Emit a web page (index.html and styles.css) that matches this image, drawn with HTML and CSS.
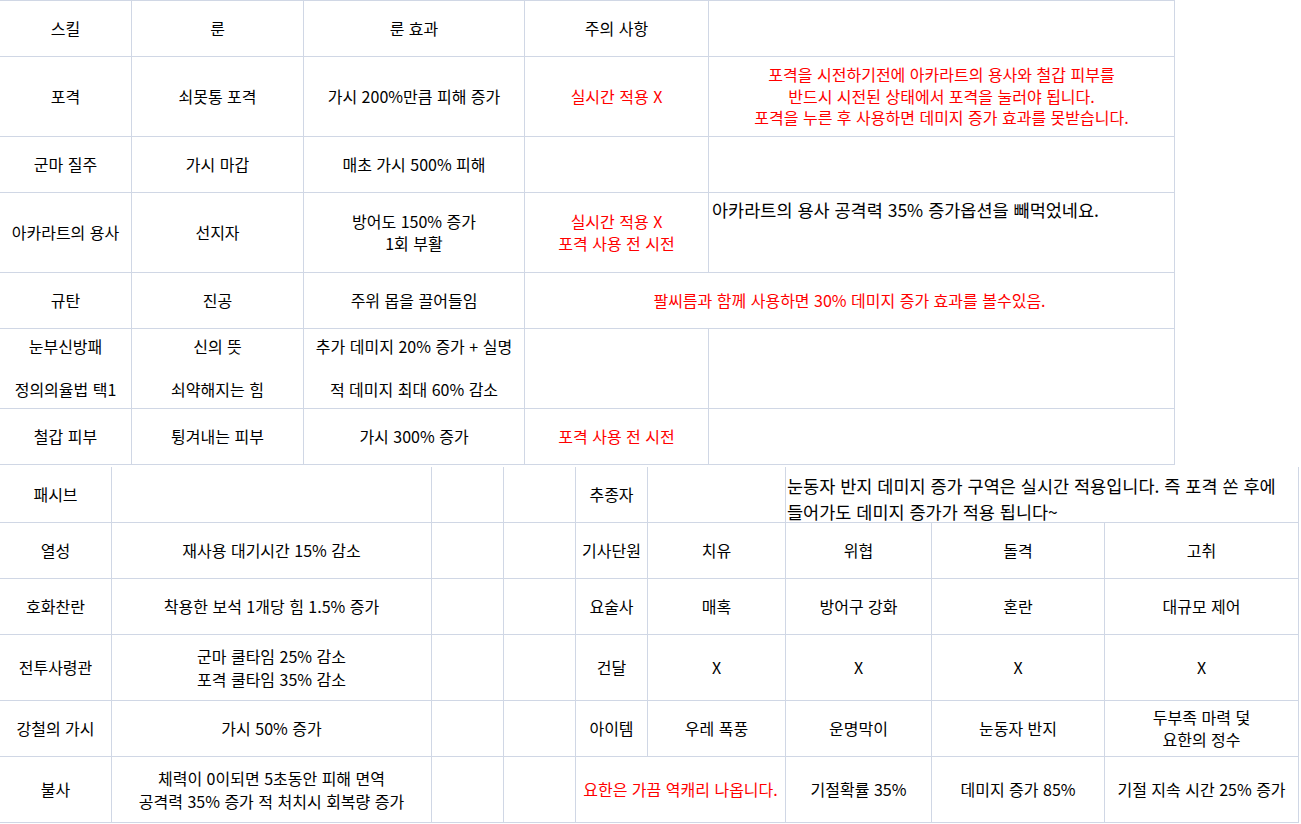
FILE: index.html
```html
<!DOCTYPE html>
<html lang="ko">
<head>
<meta charset="utf-8">
<title>룬 정리</title>
<link rel="stylesheet" href="styles.css">
</head>
<body>
<div class="sheet top">
  <div class="c">스킬</div>
  <div class="c">룬</div>
  <div class="c">룬 효과</div>
  <div class="c">주의 사항</div>
  <div class="c"></div>

  <div class="c">포격</div>
  <div class="c">쇠못통 포격</div>
  <div class="c">가시 200%만큼 피해 증가</div>
  <div class="c red">실시간 적용 X</div>
  <div class="c red">포격을 시전하기전에 아카라트의 용사와 철갑 피부를<br>반드시 시전된 상태에서 포격을 눌러야 됩니다.<br>포격을 누른 후 사용하면 데미지 증가 효과를 못받습니다.</div>

  <div class="c">군마 질주</div>
  <div class="c">가시 마갑</div>
  <div class="c">매초 가시 500% 피해</div>
  <div class="c"></div>
  <div class="c"></div>

  <div class="c">아카라트의 용사</div>
  <div class="c">선지자</div>
  <div class="c">방어도 150% 증가<br>1회 부활</div>
  <div class="c red">실시간 적용 X<br>포격 사용 전 시전</div>
  <div class="c note">아카라트의 용사 공격력 35% 증가옵션을 빼먹었네요.</div>

  <div class="c">규탄</div>
  <div class="c">진공</div>
  <div class="c">주위 몹을 끌어들임</div>
  <div class="c red span2">팔씨름과 함께 사용하면 30% 데미지 증가 효과를 볼수있음.</div>

  <div class="c">눈부신방패<br><br>정의의율법 택1</div>
  <div class="c">신의 뜻<br><br>쇠약해지는 힘</div>
  <div class="c">추가 데미지 20% 증가 + 실명<br><br>적 데미지 최대 60% 감소</div>
  <div class="c"></div>
  <div class="c"></div>

  <div class="c">철갑 피부</div>
  <div class="c">튕겨내는 피부</div>
  <div class="c">가시 300% 증가</div>
  <div class="c red">포격 사용 전 시전</div>
  <div class="c"></div>
</div>

<div class="sheet bottom">
  <div class="c">패시브</div>
  <div class="c"></div>
  <div class="c"></div>
  <div class="c"></div>
  <div class="c">추종자</div>
  <div class="c"></div>
  <div class="c wrapnote span3">눈동자 반지 데미지 증가 구역은 실시간 적용입니다. 즉 포격 쏜 후에<br>들어가도 데미지 증가가 적용 됩니다~</div>

  <div class="c">열성</div>
  <div class="c">재사용 대기시간 15% 감소</div>
  <div class="c"></div>
  <div class="c"></div>
  <div class="c">기사단원</div>
  <div class="c">치유</div>
  <div class="c">위협</div>
  <div class="c">돌격</div>
  <div class="c">고취</div>

  <div class="c">호화찬란</div>
  <div class="c">착용한 보석 1개당 힘 1.5% 증가</div>
  <div class="c"></div>
  <div class="c"></div>
  <div class="c">요술사</div>
  <div class="c">매혹</div>
  <div class="c">방어구 강화</div>
  <div class="c">혼란</div>
  <div class="c">대규모 제어</div>

  <div class="c">전투사령관</div>
  <div class="c tall">군마 쿨타임 25% 감소<br>포격 쿨타임 35% 감소</div>
  <div class="c"></div>
  <div class="c"></div>
  <div class="c">건달</div>
  <div class="c">X</div>
  <div class="c">X</div>
  <div class="c">X</div>
  <div class="c">X</div>

  <div class="c">강철의 가시</div>
  <div class="c">가시 50% 증가</div>
  <div class="c"></div>
  <div class="c"></div>
  <div class="c">아이템</div>
  <div class="c">우레 폭풍</div>
  <div class="c">운명막이</div>
  <div class="c">눈동자 반지</div>
  <div class="c">두부족 마력 덫<br>요한의 정수</div>

  <div class="c">불사</div>
  <div class="c tall">체력이 0이되면 5초동안 피해 면역<br>공격력 35% 증가 적 처치시 회복량 증가</div>
  <div class="c"></div>
  <div class="c"></div>
  <div class="c red span2">요한은 가끔 역캐리 나옵니다.</div>
  <div class="c">기절확률 35%</div>
  <div class="c">데미지 증가 85%</div>
  <div class="c">기절 지속 시간 25% 증가</div>
</div>
</body>
</html>
```

FILE: styles.css
```css
html, body {
  margin: 0;
  padding: 0;
  background: #ffffff;
}

body {
  font-family: "Noto Sans CJK KR", "Noto Sans", sans-serif;
  font-size: 16px;
  color: #000000;
}

.sheet {
  display: grid;
}

.top {
  width: 1175px;
  grid-template-columns: 132px 172px 221px 184px 466px;
  grid-template-rows: 56px 80px 56px 80px 56px 80px 56px;
  border-top: 1px solid #d0d7e5;
}

.bottom {
  width: 1299px;
  margin-top: 2px;
  grid-template-columns: 112px 320px 72px 72px 72px 138px 146px 173px 194px;
  grid-template-rows: 56px 56px 56px 66px 56px 66px;
}

.c {
  box-sizing: border-box;
  border-right: 1px solid #d0d7e5;
  border-bottom: 1px solid #d0d7e5;
  display: flex;
  align-items: center;
  justify-content: center;
  text-align: center;
  line-height: 21.5px;
  white-space: nowrap;
}

.red {
  color: #ff0000;
}

.span2 {
  grid-column: span 2;
}

.span3 {
  grid-column: span 3;
}

.note {
  align-items: flex-start;
  justify-content: flex-start;
  text-align: left;
  font-size: 17.5px;
  line-height: 22px;
  padding: 6px 0 0 3px;
}

.wrapnote {
  align-items: center;
  justify-content: flex-start;
  text-align: left;
  font-size: 17.5px;
  line-height: 26px;
  padding: 8px 0 0 1px;
}

.tall {
  line-height: 23px;
}
```
